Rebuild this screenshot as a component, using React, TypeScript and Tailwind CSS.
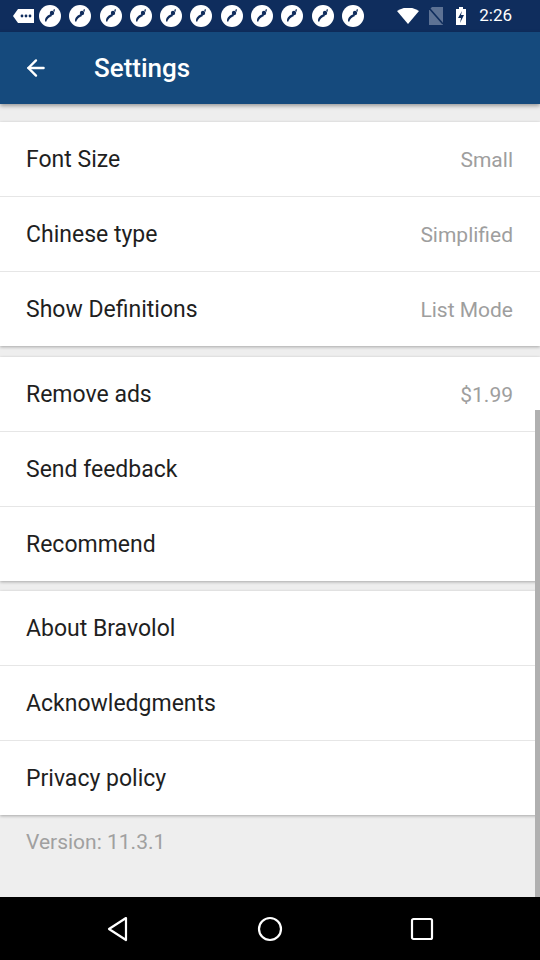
import { ArrowLeft } from "lucide-react";

const groups = [
  [
    { label: "Font Size", value: "Small" },
    { label: "Chinese type", value: "Simplified" },
    { label: "Show Definitions", value: "List Mode" },
  ],
  [
    { label: "Remove ads", value: "$1.99" },
    { label: "Send feedback", value: "" },
    { label: "Recommend", value: "" },
  ],
  [
    { label: "About Bravolol", value: "" },
    { label: "Acknowledgments", value: "" },
    { label: "Privacy policy", value: "" },
  ],
];

function AppDot() {
  return (
    <svg width="22" height="22" viewBox="0 0 22 22">
      <circle cx="11" cy="11" r="11" fill="#fff" />
      <path d="M6 16 C6 12 9 10 12 9 L13 11 C10 12 8 14 7 17 Z" fill="#0f2c5c" />
      <circle cx="13" cy="8" r="2.2" fill="#0f2c5c" />
      <path d="M14 5 L16 4 L15.5 7 Z" fill="#0f2c5c" />
    </svg>
  );
}

function StatusBar() {
  return (
    <div className="h-[32px] bg-[#0f2d5d] flex items-center px-[13px] text-white">
      <svg width="22" height="16" viewBox="0 0 22 16" className="mr-[4px]">
        <path d="M5 1 H21 V15 H5 L0 8 Z" fill="#fff" />
        <circle cx="9" cy="8" r="1.4" fill="#0f2d5d" />
        <circle cx="13" cy="8" r="1.4" fill="#0f2d5d" />
        <circle cx="17" cy="8" r="1.4" fill="#0f2d5d" />
      </svg>
      <div className="flex gap-[8.3px]">
        {Array.from({ length: 11 }).map((_, i) => (
          <AppDot key={i} />
        ))}
      </div>
      <div className="ml-auto flex items-center gap-[10px]">
        <svg width="22" height="16" viewBox="0 0 22 16">
          <path d="M0 3 Q11 -4 22 3 L11 16 Z" fill="#fff" />
        </svg>
        <svg width="14" height="18" viewBox="0 0 14 18">
          <path d="M3 0 H14 V18 H0 V3 Z" fill="#5d7294" />
          <path d="M0 1 L14 17" stroke="#0f2d5d" strokeWidth="1.6" />
        </svg>
        <svg width="10" height="18" viewBox="0 0 10 18" className="ml-[3px]">
          <rect x="3" y="0" width="4" height="2" fill="#fff" />
          <rect x="0" y="2" width="10" height="16" fill="#fff" />
          <path d="M6 4 L2 11 H5 L4 16 L8 8 H5 Z" fill="#0f2d5d" />
        </svg>
        <span className="text-[17px] ml-[3px] mr-[15px]">2:26</span>
      </div>
    </div>
  );
}

function Row({ label, value, last }: { label: string; value: string; last: boolean }) {
  return (
    <div
      className={`flex items-center pl-[26px] pr-[27px] pt-[3px] ${last ? "h-[74px]" : "h-[75px] border-b border-[#e6e6e6]"}`}
    >
      <span className="text-[23px] text-[#1f1f1f]">{label}</span>
      {value && <span className="ml-auto text-[21px] text-[#9e9e9e]">{value}</span>}
    </div>
  );
}

export default function App() {
  return (
    <div className="w-[540px] h-[960px] flex flex-col bg-[#eeeeee] font-['Roboto',sans-serif] overflow-hidden">
      <StatusBar />
      <div className="h-[72px] bg-[#154a7d] flex items-center text-white shadow-[0_2px_4px_rgba(0,0,0,0.35)] relative z-10">
        <ArrowLeft size={26} strokeWidth={2.2} className="ml-[23px]" />
        <span className="ml-[45px] text-[26px] font-medium">Settings</span>
      </div>
      <div className="flex-1 relative flex flex-col pt-[18px]">
        {groups.map((g, gi) => (
          <div
            key={gi}
            className={`bg-white shadow-[0_1px_3px_rgba(0,0,0,0.3)] ${gi === 1 ? "mt-[11px]" : gi === 2 ? "mt-[10px]" : ""}`}
          >
            {g.map((r, ri) => (
              <Row key={r.label} label={r.label} value={r.value} last={ri === g.length - 1} />
            ))}
          </div>
        ))}
        <div className="pl-[26px] pt-[12px] text-[21px] text-[#a0a0a0]">Version: 11.3.1</div>
        <div className="absolute right-0 top-[306px] bottom-0 w-[5px] bg-[#b0b0b0]" />
      </div>
      <div className="h-[63px] bg-black flex items-center justify-between px-[106px]">
        <svg width="24" height="26" viewBox="0 0 24 26">
          <path d="M20 2 L3 13 L20 24 Z" fill="none" stroke="#fff" strokeWidth="2.2" strokeLinejoin="round" />
        </svg>
        <svg width="26" height="26" viewBox="0 0 26 26">
          <circle cx="13" cy="13" r="11" fill="none" stroke="#fff" strokeWidth="2.2" />
        </svg>
        <svg width="24" height="24" viewBox="0 0 24 24">
          <rect x="2" y="2" width="20" height="20" rx="1.5" fill="none" stroke="#fff" strokeWidth="2.2" />
        </svg>
      </div>
    </div>
  );
}
